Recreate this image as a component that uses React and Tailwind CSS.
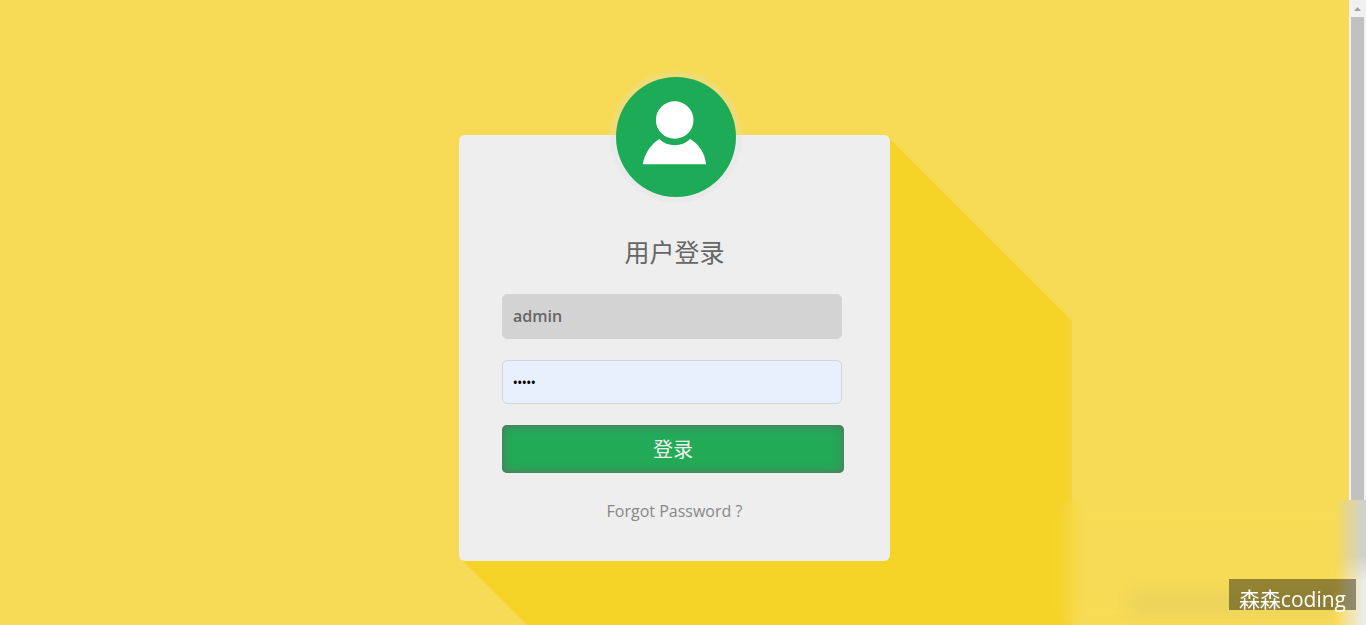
import { useState } from "react";

function Avatar() {
  return (
    <div className="absolute -top-16 left-[151px] size-[132px] rounded-full bg-[#dedede38] p-1.5">
      <svg viewBox="0 0 120 120" className="size-full" aria-hidden="true">
        <circle cx="60" cy="60" r="60" fill="#1dab57" />
        <circle cx="58.7" cy="43" r="18.8" fill="#fff" />
        <path
          d="M26.8 87.2C28.5 77 34.5 67.5 43.3 62C51.5 70.3 66 70.3 74.2 62C83.3 67.5 89.3 77 90 87.2Z"
          fill="#fff"
        />
      </svg>
    </div>
  );
}

function LongShadow() {
  return (
    <svg
      className="pointer-events-none absolute top-0 left-0 h-[620px] w-[620px]"
      viewBox="0 0 620 620"
      aria-hidden="true"
    >
      <defs>
        <linearGradient id="shade" x1="0" x2="613" y1="0" y2="0" gradientUnits="userSpaceOnUse">
          <stop offset="0.985" stopColor="#f5d327" />
          <stop offset="1" stopColor="#f5d53a" />
        </linearGradient>
      </defs>
      <path d="M428 1L613 186V612H190L2 424Z" fill="url(#shade)" />
    </svg>
  );
}

function LoginCard() {
  const [user, setUser] = useState("admin");
  const [password, setPassword] = useState("admin");
  const field = "w-[340px] max-w-full rounded-[5px] border px-2.5 font-semibold outline-none";

  return (
    <section className="relative w-[431px]">
      <LongShadow />
      <div className="relative rounded-md bg-[#eeeeee] pt-[97px] pb-[38px]">
        <Avatar />
        <h1 className="text-center text-[25px] leading-10 text-[#666666]">用户登录</h1>
        <form
          className="mt-[22px] flex flex-col gap-[21px] pr-[46px] pl-[43px]"
          onSubmit={(event) => event.preventDefault()}
        >
          <input
            aria-label="Username"
            type="text"
            className={`${field} h-[45px] border-[#d9d3d3] bg-[#d3d3d3] pb-0.5 text-base text-[#666666]`}
            value={user}
            onChange={(event) => setUser(event.target.value)}
          />
          <input
            aria-label="Password"
            type="password"
            className={`${field} h-11 border-[#ddd3d7] bg-[#e8f0fe] text-xs text-black`}
            value={password}
            onChange={(event) => setPassword(event.target.value)}
          />
          <button
            type="submit"
            className="h-12 rounded-[5px] bg-[#22aa57] pt-0.5 text-xl text-[#eeeeee] shadow-[inset_0_0_10px_#666666]"
          >
            登录
          </button>
        </form>
        <p className="mt-[26px] text-center text-base leading-6">
          <a href="#forgot" className="text-[#888888]">
            Forgot Password ?
          </a>
        </p>
      </div>
    </section>
  );
}

function ScrollRail() {
  return (
    <div className="flex w-[17px] shrink-0 flex-col items-center bg-[#f1f1f1] pb-14" aria-hidden="true">
      <svg className="h-[17px] w-[17px]" viewBox="0 0 17 17">
        <path d="M5 11L8.5 7L12 11Z" fill="#a3a3a3" />
      </svg>
      <div className="w-[13px] grow bg-[#c1c1c1]" />
    </div>
  );
}

function FrostedCorner() {
  return (
    <div className="pointer-events-none absolute right-0 bottom-0 h-[125px] w-[314px] overflow-hidden backdrop-blur-[9px]">
      <div className="absolute right-2 bottom-3 h-5 w-[228px] bg-[#a0a08a]/15 blur-[9px]" />
      <div className="absolute top-0 right-0 h-full w-8 bg-linear-to-b from-[#d0d0d0] from-45% to-[#ececec] to-65%" />
      <div className="absolute top-0 right-0 h-full w-8 bg-linear-to-r from-[#f7db56] from-5% via-[#f7db56]/50 via-45% to-[#f7db56]/0 to-95%" />
    </div>
  );
}

export default function App() {
  return (
    <div className="relative flex min-h-screen overflow-hidden bg-[#f7db56] font-['Open_Sans','Noto_Sans_CJK_SC',sans-serif]">
      <main className="flex grow justify-center overflow-hidden px-4 pt-[135px] pb-16">
        <LoginCard />
      </main>
      <ScrollRail />
      <FrostedCorner />
      <div className="absolute right-2.5 bottom-[15px] h-[31px] bg-black/40 px-2.5 text-[21px] leading-10 text-white">
        森森coding
      </div>
    </div>
  );
}
